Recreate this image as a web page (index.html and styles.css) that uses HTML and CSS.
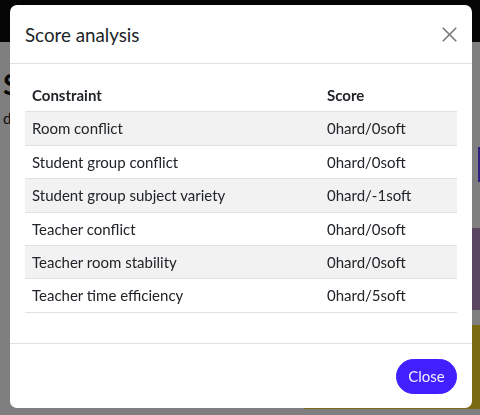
FILE: index.html
```html
<!DOCTYPE html>
<html>
<head>
<meta charset="utf-8">
<title>Score analysis</title>
<link rel="stylesheet" href="styles.css">
</head>
<body>
<div class="page">
  <header class="navbar"></header>
  <main class="content">
    <div class="left">
      <h1 class="page-title">S</h1>
      <p class="page-sub">d</p>
    </div>
    <div class="right">
      <div class="blue-chip"></div>
      <div class="purple-band"></div>
      <div class="olive-band"></div>
    </div>
  </main>
</div>

<div class="backdrop"></div>

<div class="modal-wrap">
  <div class="modal">
    <div class="modal-header">
      <h5 class="modal-title">Score analysis</h5>
      <button class="btn-close" aria-label="Close">
        <svg width="15" height="15" viewBox="0 0 15 15"><path d="M0.8 0.8L14.2 14.2M14.2 0.8L0.8 14.2" stroke="#777777" stroke-width="1.6" fill="none"/></svg>
      </button>
    </div>
    <div class="modal-body">
      <table class="score-table">
        <thead>
          <tr><th class="c1">Constraint</th><th>Score</th></tr>
        </thead>
        <tbody>
          <tr class="odd"><td>Room conflict</td><td>0hard/0soft</td></tr>
          <tr><td>Student group conflict</td><td>0hard/0soft</td></tr>
          <tr class="odd"><td>Student group subject variety</td><td>0hard/-1soft</td></tr>
          <tr><td>Teacher conflict</td><td>0hard/0soft</td></tr>
          <tr class="odd"><td>Teacher room stability</td><td>0hard/0soft</td></tr>
          <tr><td>Teacher time efficiency</td><td>0hard/5soft</td></tr>
        </tbody>
      </table>
    </div>
    <div class="modal-footer">
      <button class="btn-primary">Close</button>
    </div>
  </div>
</div>
</body>
</html>
```
FILE: styles.css
```css
* { box-sizing: border-box; }
html, body { margin: 0; padding: 0; height: 100%; }
body {
  font-family: Lato, "Noto Sans", sans-serif;
  font-size: 15px;
  color: #212529;
  background: #ffffff;
  overflow: hidden;
}

/* background page */
.page { height: 415px; display: flex; flex-direction: column; }
.navbar { height: 42px; background: #0a0a0a; flex: none; }
.content { flex: 1; display: flex; justify-content: space-between; }
.left { padding: 22px 0 0 3px; }
.page-title { margin: 0; font-size: 29px; line-height: 40px; font-weight: 700; color: #111; }
.page-sub { margin: 4px 0 0; font-size: 15px; line-height: 20px; color: #222; }
.right { width: 176px; display: flex; flex-direction: column; align-items: flex-end; padding-top: 105px; }
.blue-chip { width: 2px; height: 35px; background: #5a3cff; }
.purple-band { width: 176px; height: 82px; margin-top: 46px; background: #b68cc4; }
.olive-band { width: 176px; height: 84px; margin-top: 15px; background: #f4d424; }

.backdrop { position: fixed; inset: 0; background: rgba(0, 0, 0, 0.5); }

/* modal */
.modal-wrap { position: fixed; inset: 0; padding: 5px 8px 0 10px; }
.modal {
  background: #fff;
  border-radius: 7px;
  width: 462px;
  display: flex;
  flex-direction: column;
}
.modal-header {
  display: flex;
  align-items: center;
  justify-content: space-between;
  padding: 15px 15px 15px 15px;
  height: 59px;
  border-bottom: 1px solid #dee2e6;
}
.modal-title { margin: 0; font-size: 18.75px; line-height: 27px; font-weight: 400; color: #212529; }
.btn-close {
  border: 0; background: none; padding: 0; width: 15px; height: 15px;
  display: flex; cursor: pointer;
}
.modal-body { padding: 15px 15px 30px; }
.score-table { width: 432px; border-collapse: collapse; }
.score-table th, .score-table td {
  text-align: left;
  padding: 5px 7px;
  line-height: 22.4px;
  border-bottom: 1px solid #dee2e6;
  color: #212529;
}
.score-table th { font-weight: 700; }
.score-table .c1 { width: 295px; }
.score-table tr.odd td { background: #f2f2f2; }
.modal-footer {
  display: flex;
  justify-content: flex-end;
  padding: 15px 15px 14px;
  border-top: 1px solid #dee2e6;
}
.btn-primary {
  font-family: inherit;
  font-size: 15px;
  line-height: 22.5px;
  height: 35px;
  padding: 5px 11.25px;
  border: 1px solid #4020ff;
  background: #4020ff;
  color: #f0f0ff;
  border-radius: 18px;
}
```
